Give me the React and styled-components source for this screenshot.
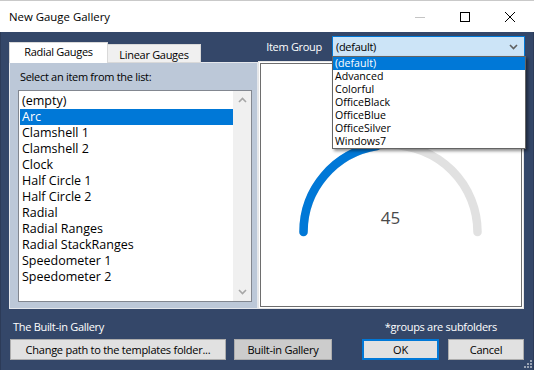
import React from "react";
import styled, { createGlobalStyle } from "styled-components";

const FONT = `"Open Sans", "Noto Sans", sans-serif`;

const GlobalStyle = createGlobalStyle`
  html, body {
    margin: 0;
    padding: 0;
    background: #344769;
  }
  body {
    font-family: ${FONT};
    font-size: 12px;
    color: #000;
  }
  * { box-sizing: border-box; }
`;

const gaugeItems = [
  "(empty)",
  "Arc",
  "Clamshell 1",
  "Clamshell 2",
  "Clock",
  "Half Circle 1",
  "Half Circle 2",
  "Radial",
  "Radial Ranges",
  "Radial StackRanges",
  "Speedometer 1",
  "Speedometer 2",
];

const groups = [
  "(default)",
  "Advanced",
  "Colorful",
  "OfficeBlack",
  "OfficeBlue",
  "OfficeSilver",
  "Windows7",
];

const Window = styled.div`
  width: 534px;
  height: 370px;
  display: flex;
  flex-direction: column;
  position: relative;
  overflow: hidden;
`;

const TitleBar = styled.div`
  height: 32px;
  background: #fff;
  border-top: 1px solid #c9c9c9;
  display: flex;
  align-items: center;
  padding: 0 2px 0 9px;
`;

const Title = styled.div`
  flex: 1;
  font-size: 11.4px;
  color: #000;
`;

const CaptionButton = styled.div`
  width: 45px;
  height: 31px;
  display: flex;
  align-items: center;
  justify-content: center;
`;

const Content = styled.div`
  flex: 1;
  background: #344769;
  border-left: 1px solid #2c3b58;
  border-right: 1px solid #2c3b58;
  padding: 4px 8px 0 8px;
  display: flex;
  flex-direction: column;
`;

const TopGrid = styled.div`
  display: grid;
  grid-template-columns: 249px 267px;
`;

const LeftColumn = styled.div`
  display: flex;
  flex-direction: column;
  padding-top: 6px;
`;

const TabStrip = styled.div`
  height: 21px;
  display: flex;
  align-items: flex-end;
`;

const Tab = styled.div`
  position: relative;
  z-index: 1;
  height: ${(p) => (p.$active ? "21px" : "19px")};
  width: ${(p) => (p.$active ? "99px" : "93px")};
  background: ${(p) => (p.$active ? "#fff" : "#f0f0f0")};
  border: 1px solid #d9d9d9;
  border-bottom: ${(p) => (p.$active ? "none" : "1px solid #d9d9d9")};
  border-left: ${(p) => (p.$active ? "1px solid #d9d9d9" : "none")};
  display: flex;
  justify-content: center;
  padding-top: ${(p) => (p.$active ? "1px" : "2px")};
  font-size: 11px;
  letter-spacing: -0.3px;
  line-height: 15px;
`;

const TabPage = styled.div`
  margin-top: -1px;
  height: 247px;
  border: 1px solid #e4e7ec;
  background: #bcc8d8;
  padding: 6px 5px 6px 8px;
  display: flex;
  flex-direction: column;
`;

const Label = styled.div`
  padding-left: 2px;
  line-height: 15px;
  font-size: 11px;
  letter-spacing: -0.3px;
  white-space: nowrap;
  color: ${(p) => (p.$light ? "#fff" : "#000")};
`;

const ListBox = styled.div`
  margin-top: 6px;
  height: 212px;
  border: 1px solid #828790;
  background: #fff;
  display: flex;
`;

const Items = styled.div`
  flex: 1;
  padding-top: 2px;
`;

const Item = styled.div`
  height: 16px;
  line-height: 16px;
  margin-left: 1px;
  padding-left: 2px;
  font-size: 12.5px;
  white-space: nowrap;
  background: ${(p) => (p.$selected ? "#0078d7" : "transparent")};
  color: ${(p) => (p.$selected ? "#fff" : "#000")};
`;

const ScrollBar = styled.div`
  width: 18px;
  background: #f0f0f0;
  display: flex;
  flex-direction: column;
  justify-content: space-between;
  align-items: center;
  padding: 6px 0 6px;
`;

const RightColumn = styled.div`
  display: flex;
  flex-direction: column;
`;

const GroupRow = styled.div`
  height: 21px;
  display: flex;
  justify-content: flex-end;
  align-items: center;
  gap: 10px;
`;

const Combo = styled.div`
  position: relative;
  z-index: 5;
  width: 193px;
  height: 21px;
  background: #cce4f7;
  border: 1px solid #0078d7;
  display: flex;
  align-items: center;
  justify-content: space-between;
  padding: 0 6px 0 3px;
  font-size: 11px;
  letter-spacing: -0.3px;
`;

const DropList = styled.div`
  position: absolute;
  top: 100%;
  left: -1px;
  width: 194px;
  background: #fff;
  border: 1px solid #646464;
  box-shadow: 2px 2px 3px rgba(0, 0, 0, 0.45);
  letter-spacing: 0;
`;

const DropItem = styled.div`
  height: 13px;
  line-height: 13px;
  padding-left: 2px;
  font-size: 10.6px;
  background: ${(p) => (p.$selected ? "#0078d7" : "#fff")};
  color: ${(p) => (p.$selected ? "#fff" : "#000")};
`;

const GaugeFrame = styled.div`
  margin-top: 4px;
  width: 266px;
  height: 248px;
  background: #fff;
  border: 1px solid #e6e6e6;
  padding: 1px;
`;

const GaugeInner = styled.div`
  height: 100%;
  border: 1px solid #6e6e6e;
`;

const BottomArea = styled.div`
  margin-top: 10px;
  display: flex;
  flex-direction: column;
`;

const NoteRow = styled.div`
  display: flex;
  justify-content: space-between;
  padding: 0 28px 0 2px;
`;

const ButtonRow = styled.div`
  margin-top: 5px;
  display: flex;
  padding: 0 1px 0 1px;
`;

const Button = styled.div`
  width: ${(p) => p.$w}px;
  height: 21px;
  margin-left: ${(p) => p.$ml || 0}px;
  background: ${(p) => (p.$pressed ? "#cccccc" : "#e1e1e1")};
  border: ${(p) => (p.$default ? "2px solid #0078d7" : "1px solid #adadad")};
  display: flex;
  align-items: center;
  justify-content: center;
  font-size: 11px;
  letter-spacing: -0.25px;
  white-space: nowrap;
`;

const Grip = styled.svg`
  position: absolute;
  right: 2px;
  bottom: 2px;
`;

const Chevron = ({ up, color = "#a6a6a6" }) => (
  <svg width="9" height="6" viewBox="0 0 9 6">
    <path
      d={up ? "M1 5 L4.5 1.5 L8 5" : "M1 1 L4.5 4.5 L8 1"}
      fill="none"
      stroke={color}
      strokeWidth="1.6"
    />
  </svg>
);

const Gauge = () => {
  const cx = 129.5;
  const cy = 168;
  const r = 87;
  const a = Math.PI * (1 - 0.45);
  const ex = cx + r * Math.cos(a);
  const ey = cy - r * Math.sin(a);
  return (
    <svg width="260" height="242" viewBox="0 0 260 242">
      <path
        d={`M ${cx - r} ${cy} A ${r} ${r} 0 0 1 ${cx + r} ${cy}`}
        fill="none"
        stroke="#e1e1e1"
        strokeWidth="8.5"
        strokeLinecap="round"
      />
      <path
        d={`M ${cx - r} ${cy} A ${r} ${r} 0 0 1 ${ex} ${ey}`}
        fill="none"
        stroke="#0078d7"
        strokeWidth="8.5"
        strokeLinecap="round"
      />
      <text
        x={cx}
        y={160}
        textAnchor="middle"
        fontFamily={FONT}
        fontSize="17"
        fill="#4a4a4a"
      >
        45
      </text>
    </svg>
  );
};

export default function App() {
  return (
    <>
      <GlobalStyle />
      <Window>
        <TitleBar>
          <Title>New Gauge Gallery</Title>
          <CaptionButton>
            <svg width="10" height="10" viewBox="0 0 10 10">
              <path d="M0 5.5 H10" stroke="#c4c4c4" strokeWidth="1" />
            </svg>
          </CaptionButton>
          <CaptionButton>
            <svg width="10" height="10" viewBox="0 0 10 10">
              <rect x="0.5" y="0.5" width="9" height="9" fill="none" stroke="#000" strokeWidth="1" />
            </svg>
          </CaptionButton>
          <CaptionButton>
            <svg width="10" height="10" viewBox="0 0 10 10">
              <path d="M0 0 L10 10 M10 0 L0 10" stroke="#000" strokeWidth="1" />
            </svg>
          </CaptionButton>
        </TitleBar>
        <Content>
          <TopGrid>
            <LeftColumn>
              <TabStrip>
                <Tab $active>Radial Gauges</Tab>
                <Tab>Linear Gauges</Tab>
              </TabStrip>
              <TabPage>
                <Label>Select an item from the list:</Label>
                <ListBox>
                  <Items>
                    {gaugeItems.map((item) => (
                      <Item key={item} $selected={item === "Arc"}>
                        {item}
                      </Item>
                    ))}
                  </Items>
                  <ScrollBar>
                    <Chevron up />
                    <Chevron />
                  </ScrollBar>
                </ListBox>
              </TabPage>
            </LeftColumn>
            <RightColumn>
              <GroupRow>
                <Label $light>Item Group</Label>
                <Combo>
                  <span>(default)</span>
                  <Chevron color="#606060" />
                  <DropList>
                    {groups.map((g) => (
                      <DropItem key={g} $selected={g === "(default)"}>
                        {g}
                      </DropItem>
                    ))}
                  </DropList>
                </Combo>
              </GroupRow>
              <GaugeFrame>
                <GaugeInner>
                  <Gauge />
                </GaugeInner>
              </GaugeFrame>
            </RightColumn>
          </TopGrid>
          <BottomArea>
            <NoteRow>
              <Label $light>The Built-in Gallery</Label>
              <Label $light>*groups are subfolders</Label>
            </NoteRow>
            <ButtonRow>
              <Button $w={216}>Change path to the templates folder...</Button>
              <Button $w={98} $ml={8} $pressed>
                Built-in Gallery
              </Button>
              <Button $w={77} $ml={30} $default>
                OK
              </Button>
              <Button $w={76} $ml={9}>
                Cancel
              </Button>
            </ButtonRow>
          </BottomArea>
        </Content>
        <Grip width="9" height="9" viewBox="0 0 9 9">
          {[
            [7, 1],
            [4, 4],
            [7, 4],
            [1, 7],
            [4, 7],
            [7, 7],
          ].map(([x, y]) => (
            <rect key={`${x}-${y}`} x={x} y={y} width="2" height="2" fill="#9aa3b3" />
          ))}
        </Grip>
      </Window>
    </>
  );
}
